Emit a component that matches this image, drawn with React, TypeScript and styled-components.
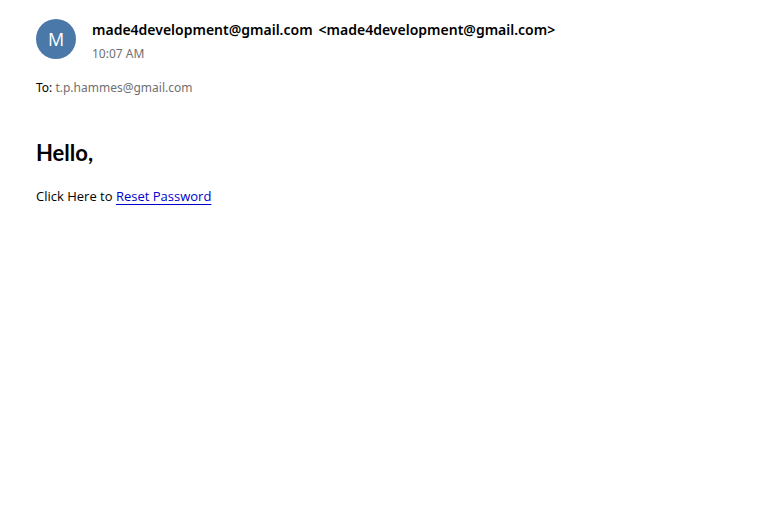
import React from "react";
import styled, { createGlobalStyle } from "styled-components";

const GlobalStyle = createGlobalStyle`
  body {
    margin: 0;
    background: #ffffff;
    color: #000000;
    font-family: "Noto Sans", sans-serif;
    font-size: 12px;
    line-height: 18px;
  }
`;

const Message = styled.article`
  padding: 19px 36px;
`;

const Header = styled.header`
  display: flex;
  gap: 16px;
`;

const Avatar = styled.div`
  display: flex;
  align-items: center;
  justify-content: center;
  flex: none;
  width: 40px;
  height: 40px;
  border-radius: 50%;
  background: #4a78a8;
  color: #ffffff;
  font-family: "Open Sans", sans-serif;
  font-size: 18px;
`;

const Sender = styled.h1`
  display: flex;
  flex-wrap: wrap;
  column-gap: 6px;
  margin: 0;
  font-size: 14px;
  line-height: 22px;
  font-weight: 600;
`;

const Time = styled.time`
  display: block;
  margin-top: 4px;
  color: #707070;
`;

const Recipients = styled.p`
  margin: 16px 0 0;
`;

const Address = styled.span`
  color: #707070;
`;

const Body = styled.section`
  margin-top: 42px;
  font-family: "Open Sans", sans-serif;
  font-size: 13px;
`;

const Greeting = styled.h2`
  margin: 0;
  font-family: Lato, sans-serif;
  font-size: 22px;
  line-height: 28px;
  font-weight: 700;
`;

const Text = styled.p`
  margin: 20px 0 0;
`;

const Link = styled.a`
  color: #0000cc;
  text-underline-offset: 3px;
  text-decoration-skip-ink: none;
`;

export default function App() {
  return (
    <>
      <GlobalStyle />
      <Message>
        <Header>
          <Avatar>M</Avatar>
          <div>
            <Sender>
              <span>made4development@gmail.com</span>
              <span>&lt;made4development@gmail.com&gt;</span>
            </Sender>
            <Time>10:07 AM</Time>
          </div>
        </Header>
        <Recipients>
          To: <Address>t.p.hammes@gmail.com</Address>
        </Recipients>
        <Body>
          <Greeting>Hello,</Greeting>
          <Text>
            Click Here to <Link href="#">Reset Password</Link>
          </Text>
        </Body>
      </Message>
    </>
  );
}
